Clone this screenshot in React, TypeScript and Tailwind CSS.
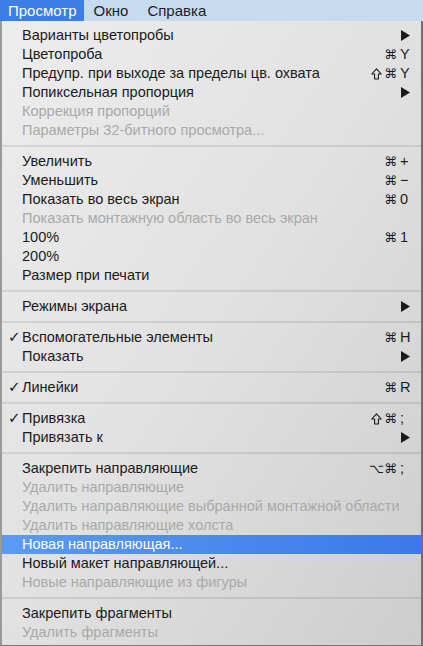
import React from 'react';

type Item =
  | { sep: true }
  | {
      sep?: false;
      label: string;
      disabled?: boolean;
      checked?: boolean;
      active?: boolean;
      submenu?: boolean;
      shift?: boolean;
      mods?: string;
      keyChar?: string;
    };

const items: Item[] = [
  { label: 'Варианты цветопробы', submenu: true },
  { label: 'Цветопроба', mods: '⌘', keyChar: 'Y' },
  { label: 'Предупр. при выходе за пределы цв. охвата', shift: true, mods: '⌘', keyChar: 'Y' },
  { label: 'Попиксельная пропорция', submenu: true },
  { label: 'Коррекция пропорций', disabled: true },
  { label: 'Параметры 32-битного просмотра...', disabled: true },
  { sep: true },
  { label: 'Увеличить', mods: '⌘', keyChar: '+' },
  { label: 'Уменьшить', mods: '⌘', keyChar: '−' },
  { label: 'Показать во весь экран', mods: '⌘', keyChar: '0' },
  { label: 'Показать монтажную область во весь экран', disabled: true },
  { label: '100%', mods: '⌘', keyChar: '1' },
  { label: '200%' },
  { label: 'Размер при печати' },
  { sep: true },
  { label: 'Режимы экрана', submenu: true },
  { sep: true },
  { label: 'Вспомогательные элементы', checked: true, mods: '⌘', keyChar: 'H' },
  { label: 'Показать', submenu: true },
  { sep: true },
  { label: 'Линейки', checked: true, mods: '⌘', keyChar: 'R' },
  { sep: true },
  { label: 'Привязка', checked: true, shift: true, mods: '⌘', keyChar: ';' },
  { label: 'Привязать к', submenu: true },
  { sep: true },
  { label: 'Закрепить направляющие', mods: '⌥⌘', keyChar: ';' },
  { label: 'Удалить направляющие', disabled: true },
  { label: 'Удалить направляющие выбранной монтажной области', disabled: true },
  { label: 'Удалить направляющие холста', disabled: true },
  { label: 'Новая направляющая...', active: true },
  { label: 'Новый макет направляющей...' },
  { label: 'Новые направляющие из фигуры', disabled: true },
  { sep: true },
  { label: 'Закрепить фрагменты' },
  { label: 'Удалить фрагменты', disabled: true },
];

function Arrow() {
  return (
    <svg width="9" height="11" viewBox="0 0 9 11" className="fill-current">
      <polygon points="0,0 9,5.5 0,11" />
    </svg>
  );
}

function ShiftIcon() {
  return (
    <svg width="11" height="12" viewBox="0 0 11 12" fill="none" stroke="currentColor" strokeWidth="1.1" strokeLinejoin="round">
      <path d="M5.5 0.8 L10.2 6 H7.4 V11 H3.6 V6 H0.8 Z" />
    </svg>
  );
}

export default function App() {
  return (
    <div
      className="w-[423px] h-[646px] flex flex-col overflow-hidden text-[14.5px] leading-[19px]"
      style={{ fontFamily: '"Liberation Sans", Arial, sans-serif' }}
    >
      <div className="h-[21px] flex items-stretch bg-[#c6dbef] text-[#1e1e1e] text-[15px]">
        <div className="pl-[8px] pr-[7px] flex items-center bg-[#3d7ee6] text-white">Просмотр</div>
        <div className="pl-[10px] pr-[9px] flex items-center">Окно</div>
        <div className="px-[10px] flex items-center">Справка</div>
      </div>
      <div className="flex-1 flex flex-col pt-[5px] border-l-2 border-r-2 border-b border-l-[#9a9a9a] border-r-[#6f6f6f] border-b-[#777] bg-gradient-to-br from-[#ededed] via-[#e1e1e1] to-[#cdcdcd]">
        {items.map((it, i) =>
          it.sep ? (
            <div key={i} className="my-[5px] h-[2px] bg-black/[0.09]" />
          ) : (
            <div
              key={i}
              className={
                'h-[19px] flex items-center pr-[10px] ' +
                (it.active
                  ? 'bg-gradient-to-r from-[#5b9bf4] to-[#3a79e7] text-white'
                  : it.disabled
                    ? 'text-[#a9a9a9]'
                    : 'text-[#1b1b1b]')
              }
            >
              <span
                className="w-[20px] pl-[6px] text-[15px]"
                style={{ fontFamily: '"DejaVu Sans", sans-serif' }}
              >
                {it.checked ? '✓' : ''}
              </span>
              <span className="flex-1 whitespace-nowrap">{it.label}</span>
              {it.submenu && (
                <span className="pr-[1px]">
                  <Arrow />
                </span>
              )}
              {it.keyChar && (
                <span className="flex items-center">
                  {it.shift && (
                    <span className="pr-[2px] flex items-center">
                      <ShiftIcon />
                    </span>
                  )}
                  <span
                    className="pr-[3px] text-[13px]"
                    style={{ fontFamily: '"DejaVu Sans", sans-serif' }}
                  >
                    {it.mods}
                  </span>
                  <span className="w-[11px]">{it.keyChar}</span>
                </span>
              )}
            </div>
          ),
        )}
      </div>
    </div>
  );
}
